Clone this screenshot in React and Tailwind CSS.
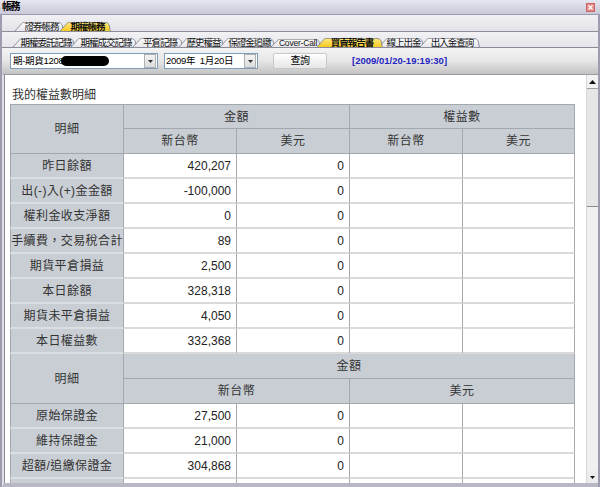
import React from 'react';

const CJK = '"Liberation Sans", "Noto Sans CJK TC", sans-serif';

const topTabs = [
  { label: '證券帳務', w: 50, cls: 'w-[50px]' },
  { label: '期權帳務', w: 52, cls: 'w-[52px]', active: true },
];

const subTabs = [
  { label: '期權委託記錄', w: 63, cls: 'w-[63px]' },
  { label: '期權成交記錄', w: 67, cls: 'w-[67px]' },
  { label: '平倉記錄', w: 51, cls: 'w-[51px]' },
  { label: '歷史權益', w: 46, cls: 'w-[46px]' },
  { label: '保證金追繳', w: 56, cls: 'w-[56px]' },
  { label: 'Cover-Call', w: 51, cls: 'w-[51px]', latin: true },
  { label: '買賣報告書', w: 67, cls: 'w-[67px]', active: true },
  { label: '線上出金', w: 46, cls: 'w-[46px]' },
  { label: '出入金查詢', w: 61, cls: 'w-[61px]' },
];

const equityRows = [
  ['昨日餘額', '420,207', '0'],
  ['出(-)入(+)金金額', '-100,000', '0'],
  ['權利金收支淨額', '0', '0'],
  ['手續費，交易稅合計', '89', '0'],
  ['期貨平倉損益', '2,500', '0'],
  ['本日餘額', '328,318', '0'],
  ['期貨未平倉損益', '4,050', '0'],
  ['本日權益數', '332,368', '0'],
];

const marginRows = [
  ['原始保證金', '27,500', '0'],
  ['維持保證金', '21,000', '0'],
  ['超額/追繳保證金', '304,868', '0'],
  ['', '', ''],
];

function Tab({ t, h }) {
  const w = t.w;
  return (
    <div className={`relative shrink-0 -mr-[5px] flex items-center justify-center pl-[5px] ${t.cls} ${t.active ? 'z-10' : ''}`}>
      <svg className="absolute inset-0 w-full h-full" viewBox={`0 0 ${w} ${h}`} preserveAspectRatio="none">
        <defs>
          <linearGradient id="tabw" x1="0" y1="0" x2="0" y2="1">
            <stop offset="0" stopColor="#ffffff" />
            <stop offset="1" stopColor="#e4e4ea" />
          </linearGradient>
          <linearGradient id="taby" x1="0" y1="0" x2="0" y2="1">
            <stop offset="0" stopColor="#ffe97a" />
            <stop offset="1" stopColor="#f6c81e" />
          </linearGradient>
        </defs>
        <path
          d={`M0.5,${h} L9,0.5 L${w - 7},0.5 Q${w - 3},0.5 ${w - 2},4 L${w - 0.5},${h}`}
          fill={t.active ? 'url(#taby)' : 'url(#tabw)'}
          stroke="#7d7d86"
          strokeWidth="1"
        />
      </svg>
      <span className={`relative leading-none text-[#111] whitespace-nowrap ${t.latin ? 'text-[8.5px] tracking-[-0.2px]' : 'text-[9.5px] tracking-[-1px]'} ${t.active ? 'font-bold' : 'font-normal'}`}>{t.label}</span>
    </div>
  );
}

// header cell, grey
const hd = 'bg-[#c9ced4] border-r border-b border-[#a3a8ae] text-center text-[12px] text-[#333] tracking-[0.5px] font-normal';

function DataRow({ row }) {
  return (
    <tr className="h-[25px]">
      <td className="bg-[#c9ced4] border-l border-l-[#a3a8ae] border-r border-r-[#a3a8ae] border-b-2 border-b-[#dcdfe2] text-center text-[12px] text-[#333] tracking-[0.4px] whitespace-nowrap leading-none overflow-hidden">{row[0]}</td>
      <td className="border-r border-r-[#a8a8a8] border-b-2 border-b-[#dadada] text-right pr-[5px] text-[12px] text-[#222] leading-none">{row[1]}</td>
      <td className="border-r border-r-[#a8a8a8] border-b-2 border-b-[#dadada] text-right pr-[5px] text-[12px] text-[#222] leading-none">{row[2]}</td>
      <td className="border-r border-r-[#a8a8a8] border-b-2 border-b-[#dadada]"></td>
      <td className="border-r border-r-[#a8a8a8] border-b-2 border-b-[#dadada]"></td>
    </tr>
  );
}

export default function App() {
  return (
    <div className="w-[600px] h-[487px] overflow-hidden flex flex-col bg-[#c4c4cf]" style={{ fontFamily: CJK }}>
      {/* title bar */}
      <div className="h-[15px] shrink-0 flex items-center justify-between pl-[2px] pr-[5px] bg-gradient-to-b from-[#e6e6ef] to-[#c9c9d8] border-b border-[#9a9ab0]">
        <span className="text-[10px] tracking-[-1.5px] font-bold leading-none text-black">帳務</span>
        <div className="w-[9px] h-[9px] bg-[#e38a8a] border border-[#c66] flex items-center justify-center">
          <svg width="5" height="5" viewBox="0 0 5 5"><path d="M0.5,0.5 L4.5,4.5 M4.5,0.5 L0.5,4.5" stroke="#fff" strokeWidth="1.2" /></svg>
        </div>
      </div>

      <div className="flex-1 min-h-0 flex flex-col border-x-[2px] border-x-[#9c9cae]">
        {/* top tabs */}
        <div className="h-[17px] shrink-0 flex items-end pl-[12px] bg-gradient-to-b from-[#f0f0f4] to-[#e2e2e8] border-b border-[#8c8c98]">
          {topTabs.map(t => <Tab key={t.label} t={t} h={15} />)}
        </div>
        {/* sub tabs */}
        <div className="h-[16px] shrink-0 flex items-end pl-[10px] bg-gradient-to-b from-[#f2f2f5] to-[#e4e4ea] border-b border-[#8c8c98]">
          {subTabs.map(t => <Tab key={t.label} t={t} h={14} />)}
        </div>
        {/* toolbar */}
        <div className="h-[26px] shrink-0 flex items-center pl-[8px] bg-gradient-to-b from-[#f3f3f3] via-[#e6e6e6] to-[#c3c3c3]">
          <div className="w-[148px] h-[16px] bg-white border border-[#7f9db9] flex items-center justify-between pl-[2px]">
            <div className="flex items-center">
              <span className="text-[9.5px] tracking-[-0.3px] leading-none text-black">期-期貨1208</span>
              <span className="w-[48px] h-[10px] rounded-full bg-black -ml-[2px]"></span>
            </div>
            <div className="w-[12px] h-[14px] mr-px bg-gradient-to-b from-[#f4f4f4] to-[#dcdcdc] border border-[#b0b0b0] flex items-center justify-center">
              <svg width="5" height="3" viewBox="0 0 5 3"><path d="M0,0 L5,0 L2.5,3 Z" fill="#333" /></svg>
            </div>
          </div>
          <div className="ml-[6px] w-[94px] h-[16px] bg-white border border-[#7f9db9] flex items-center justify-between pl-[1px]">
            <span className="text-[9.5px] tracking-[-0.3px] leading-none text-black whitespace-nowrap">2009年&nbsp;&nbsp;1月20日</span>
            <div className="w-[12px] h-[14px] mr-px bg-gradient-to-b from-[#f4f4f4] to-[#dcdcdc] border border-[#b0b0b0] flex items-center justify-center">
              <svg width="5" height="3" viewBox="0 0 5 3"><path d="M0,0 L5,0 L2.5,3 Z" fill="#333" /></svg>
            </div>
          </div>
          <button className="ml-[15px] w-[54px] h-[16px] bg-gradient-to-b from-[#ffffff] to-[#e6e6e6] border border-[#c8c8c8] rounded-[2px] text-[10px] tracking-[-0.5px] leading-none text-black">查詢</button>
          <span className="ml-[25px] text-[9.5px] font-bold text-[#2424c0] leading-none">[2009/01/20-19:19:30]</span>
        </div>

        {/* content */}
        <div className="flex-1 min-h-0 flex border-t border-[#9a9aa6] border-l-[2px] border-l-[#e0e0e6] border-b-[4px] border-b-[#b8b8c4]">
          <div className="flex-1 min-w-0 bg-white overflow-hidden pl-[5px] border-l border-[#8a8a96]">
            <div className="pt-[14px] pl-[2px] text-[12px] leading-none text-[#303030] h-[29px]">我的權益數明細</div>
            <table className="border-separate border-spacing-0 table-fixed w-[565px]">
              <colgroup>
                <col className="w-[114px]" />
                <col className="w-[113px]" />
                <col className="w-[113px]" />
                <col className="w-[113px]" />
                <col className="w-[112px]" />
              </colgroup>
              <tbody>
                <tr className="h-[25px]">
                  <td rowSpan={2} className={`${hd} border-l border-t`}>明細</td>
                  <td colSpan={2} className={`${hd} border-t`}>金額</td>
                  <td colSpan={2} className={`${hd} border-t`}>權益數</td>
                </tr>
                <tr className="h-[25px]">
                  <td className={hd}>新台幣</td>
                  <td className={hd}>美元</td>
                  <td className={hd}>新台幣</td>
                  <td className={hd}>美元</td>
                </tr>
                {equityRows.map(r => <DataRow key={r[0]} row={r} />)}
                <tr className="h-[25px]">
                  <td rowSpan={2} className={`${hd} border-l`}>明細</td>
                  <td colSpan={4} className={hd}>金額</td>
                </tr>
                <tr className="h-[25px]">
                  <td colSpan={2} className={hd}>新台幣</td>
                  <td colSpan={2} className={hd}>美元</td>
                </tr>
                {marginRows.map((r, i) => <DataRow key={i} row={r} />)}
              </tbody>
            </table>
          </div>
          {/* scrollbar */}
          <div className="w-[12px] shrink-0 bg-[#ececec] flex flex-col border-l border-[#d8d8d8]">
            <div className="h-[14px] flex items-center justify-center border-b border-[#a0a0a0] bg-[#f2f2f2]">
              <svg width="7" height="4" viewBox="0 0 7 4"><path d="M0,4 L7,4 L3.5,0 Z" fill="#111" /></svg>
            </div>
            <div className="h-[118px] bg-[#e6e6e6] border-b border-[#8c8c8c]"></div>
            <div className="flex-1 bg-[#f0f0f0]"></div>
            <div className="h-[12px] flex items-center justify-center">
              <svg width="5" height="3" viewBox="0 0 5 3"><path d="M0,0 L5,0 L2.5,3 Z" fill="#111" /></svg>
            </div>
          </div>
        </div>
      </div>
    </div>
  );
}
